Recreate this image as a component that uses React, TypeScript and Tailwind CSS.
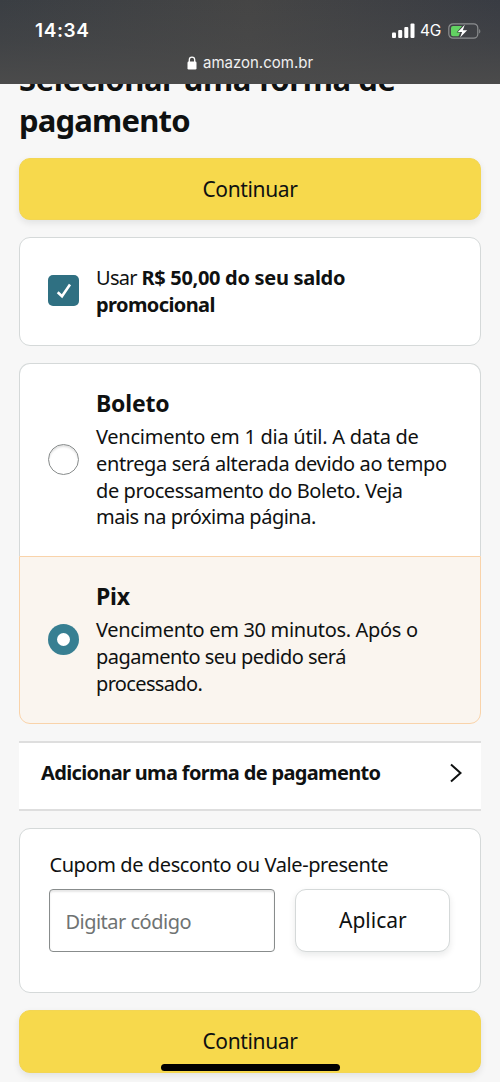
import { clsx } from 'clsx'

interface PaymentOption {
  id: string
  title: string
  lines: { text: string; tracking: string }[]
}

const boleto: PaymentOption = {
  id: 'boleto',
  title: 'Boleto',
  lines: [
    { text: 'Vencimento em 1 dia útil. A data de', tracking: 'tracking-[-0.26px]' },
    { text: 'entrega será alterada devido ao tempo', tracking: 'tracking-[-0.38px]' },
    { text: 'de processamento do Boleto. Veja', tracking: 'tracking-[-0.4px]' },
    { text: 'mais na próxima página.', tracking: 'tracking-[-0.5px]' },
  ],
}

const pix: PaymentOption = {
  id: 'pix',
  title: 'Pix',
  lines: [
    { text: 'Vencimento em 30 minutos. Após o', tracking: 'tracking-[-0.33px]' },
    { text: 'pagamento seu pedido será', tracking: 'tracking-[-0.52px]' },
    { text: 'processado.', tracking: 'tracking-[-0.65px]' },
  ],
}

function StatusBar() {
  return (
    <header className="relative z-10 h-[84px] shrink-0 bg-linear-to-r from-[#3a3e43] via-[#454545] to-[#393c43] font-[Inter,sans-serif] text-white">
      <div className="absolute inset-0 bg-linear-to-b from-[#4b4b4b]/0 via-[#4b4b4b]/40 to-[#4b4b4b]" />
      <div className="relative flex h-[62px] items-center justify-between pr-[18px] pl-[35px]">
        <span className="text-[19px] font-semibold tracking-[0.6px]">14:34</span>
        <div className="flex items-center">
          <svg width="24" height="16" viewBox="0 0 24 16" fill="currentColor">
            <rect x="0" y="9.6" width="4" height="5.4" rx="1" />
            <rect x="6.2" y="7" width="4" height="8" rx="1" />
            <rect x="12.3" y="4" width="4" height="11" rx="1" />
            <rect x="18.5" y="0.5" width="4" height="14.5" rx="1" />
          </svg>
          <span className="ml-[4px] w-[23px] text-[15.5px] tracking-[-0.2px] whitespace-nowrap">4G</span>
          <svg className="ml-[5px]" width="34" height="18" viewBox="0 0 34 18">
            <rect x="0.8" y="1.8" width="29" height="14.4" rx="4.2" fill="none" stroke="#8c8e90" strokeWidth="1.2" />
            <path d="M31.200 7v4.600c1.500-.7 1.500-3.900 0-4.600Z" fill="#8c8e90" />
            <path d="M5 4h9L8.600 10.500h3.600L10.500 14.200H5a2 2 0 0 1-2-2V6a2 2 0 0 1 2-2Z" fill="#62d262" />
            <path d="M16.800 2.800 9.800 9.900h4.300l-2 5.700 7.100-7.400h-4.400Z" fill="currentColor" />
          </svg>
        </div>
      </div>
      <div className="absolute inset-x-0 top-[52px] flex h-[22px] items-center justify-center gap-[6px]">
        <svg width="10" height="14" viewBox="0 0 10 14">
          <rect x="0.5" y="5.5" width="9" height="8" rx="1.2" fill="currentColor" />
          <path d="M2.300 6V3.800a2.700 2.700 0 0 1 5.400 0V6" fill="none" stroke="currentColor" strokeWidth="1.3" />
        </svg>
        <span className="text-[15px] text-[#f0f0f0]">amazon.com.br</span>
      </div>
    </header>
  )
}

function ContinueButton() {
  return (
    <button className="flex h-[62.5px] w-full shrink-0 items-center justify-center rounded-[11px] border border-[#f3d653] bg-[#f7d94c] pt-px text-[21px] tracking-[-0.35px] shadow-[0_3px_7px_rgba(15,17,17,0.09)]">
      Continuar
    </button>
  )
}

function OptionText({ option }: { option: PaymentOption }) {
  return (
    <div className="whitespace-nowrap">
      <h2 className="-mt-[3px] mb-[4px] text-[23px] leading-[34px] font-bold tracking-[-0.2px]">{option.title}</h2>
      {option.lines.map((line) => (
        <p key={line.text} className={clsx('text-[20px] leading-[26.7px]', line.tracking)}>
          {line.text}
        </p>
      ))}
    </div>
  )
}

export default function App() {
  return (
    <div className="flex h-[1082px] w-[500px] flex-col overflow-hidden bg-[#f7f7f7] font-['Noto_Sans',sans-serif] text-[#0f1111]">
      <StatusBar />

      <main className="flex flex-col px-[19px]">
        <div className="flex h-[73.5px] shrink-0 flex-col justify-end overflow-hidden pb-[16.5px] whitespace-nowrap">
          <h1 className="text-[31px] leading-[41px] font-bold">
            <span className="block tracking-[-0.4px]">Selecionar uma forma de</span>
            <span className="block tracking-[-0.8px]">pagamento</span>
          </h1>
        </div>

        <ContinueButton />

        {/* Promotional balance */}
        <label className="mt-[16.5px] flex h-[109px] items-center rounded-[11px] border border-[#d5d9d9] bg-white pl-7">
          <span className="mb-[2px] flex size-[31px] items-center justify-center rounded-[5px] bg-[#2f7082]">
            <svg className="mt-px ml-px" width="16" height="16" viewBox="0 0 16 16" fill="none" stroke="white" strokeWidth="2.6">
              <path d="M1.700 9.300 6 13.300 14 1.500" />
            </svg>
          </span>
          <span className="ml-[17px] text-[20px] leading-[27.5px] whitespace-nowrap">
            <span className="block tracking-[-0.3px]">
              <span className="tracking-[-0.7px]">Usar </span>
              <b className="font-bold">R$ 50,00 do seu saldo</b>
            </span>
            <b className="block font-bold tracking-[-0.6px]">promocional</b>
          </span>
        </label>

        {/* Payment methods */}
        <section className="mt-[17.5px]">
          <label className="flex h-[193px] items-center rounded-t-[11px] border border-b-0 border-[#d5d9d9] bg-white pl-7">
            <span className="mr-[17px] mb-[2px] size-[31px] rounded-full border-[1.5px] border-[#888c8c] shadow-[inset_0_2px_2px_rgba(15,17,17,0.12)]" />
            <OptionText option={boleto} />
          </label>
          <label className="flex h-[168px] items-center rounded-b-[11px] border border-[#f9d3aa] bg-[#faf5ef] pl-7">
            <span className="mr-[17px] mb-[2px] flex size-[31px] items-center justify-center rounded-full bg-[#377f92]">
              <span className="size-[13px] rounded-full bg-white" />
            </span>
            <OptionText option={pix} />
          </label>
        </section>

        <button className="mt-[17px] flex h-[70px] items-center justify-between border-y-2 border-[#dedede] bg-white pr-[19px] pb-[6px] pl-[22px]">
          <span className="text-[20px] font-bold tracking-[-0.66px] whitespace-nowrap">Adicionar uma forma de pagamento</span>
          <svg width="13" height="20" viewBox="0 0 13 20" fill="none" stroke="#0f1111" strokeWidth="2">
            <path d="m2 1.500 9.500 8.500-9.500 8.500" />
          </svg>
        </button>

        {/* Coupon or gift card */}
        <section className="mt-[17px] h-[165px] rounded-[11px] border border-[#d5d9d9] bg-white px-[29.4px] pt-[21px]">
          <p className="text-[20px] leading-[30px] tracking-[-0.4px] whitespace-nowrap">Cupom de desconto ou Vale-presente</p>
          <div className="mt-[9px] flex gap-5">
            <input
              placeholder="Digitar código"
              className="h-[63px] w-[226px] rounded-[4px] border-[1.5px] border-[#888c8c] px-[15px] pt-[2px] text-[20px] tracking-[-0.5px] shadow-[inset_0_2px_2px_rgba(15,17,17,0.1)] placeholder:text-[#6f7373]"
            />
            <button className="h-[63px] w-[155px] rounded-[11px] border border-[#d5d9d9] bg-white text-[21px] shadow-[0_3px_7px_rgba(15,17,17,0.09)]">
              Aplicar
            </button>
          </div>
        </section>

        <div className="relative mt-[17px]">
          <ContinueButton />
          <div className="absolute top-[54px] left-[142px] h-[7px] w-[179px] rounded-full bg-black" />
        </div>
      </main>
    </div>
  )
}
